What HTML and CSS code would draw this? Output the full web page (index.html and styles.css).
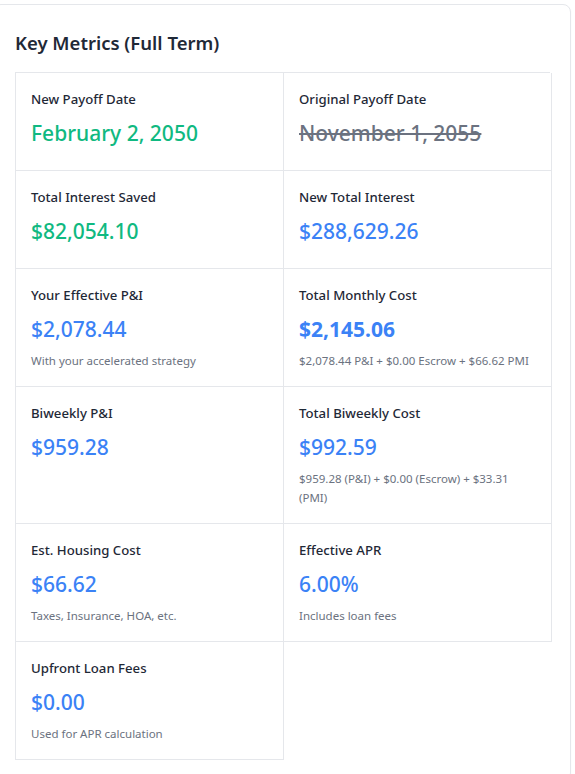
FILE: index.html
```html
<!DOCTYPE html>
<html lang="en">
<head>
<meta charset="utf-8">
<title>Key Metrics</title>
<link rel="stylesheet" href="styles.css">
</head>
<body>
  <section class="card">
    <h2 class="card-title">Key Metrics (Full Term)</h2>
    <div class="metrics">
      <div class="metric">
        <div class="label">New Payoff Date</div>
        <div class="value green">February 2, 2050</div>
      </div>
      <div class="metric">
        <div class="label">Original Payoff Date</div>
        <div class="value muted strike">November 1, 2055</div>
      </div>
      <div class="metric">
        <div class="label">Total Interest Saved</div>
        <div class="value green">$82,054.10</div>
      </div>
      <div class="metric">
        <div class="label">New Total Interest</div>
        <div class="value blue">$288,629.26</div>
      </div>
      <div class="metric">
        <div class="label">Your Effective P&amp;I</div>
        <div class="value blue">$2,078.44</div>
        <div class="note">With your accelerated strategy</div>
      </div>
      <div class="metric">
        <div class="label">Total Monthly Cost</div>
        <div class="value blue bold">$2,145.06</div>
        <div class="note">$2,078.44 P&amp;I + $0.00 Escrow + $66.62 PMI</div>
      </div>
      <div class="metric">
        <div class="label">Biweekly P&amp;I</div>
        <div class="value blue">$959.28</div>
      </div>
      <div class="metric">
        <div class="label">Total Biweekly Cost</div>
        <div class="value blue">$992.59</div>
        <div class="note">$959.28 (P&amp;I) + $0.00 (Escrow) + $33.31 (PMI)</div>
      </div>
      <div class="metric">
        <div class="label">Est. Housing Cost</div>
        <div class="value blue">$66.62</div>
        <div class="note">Taxes, Insurance, HOA, etc.</div>
      </div>
      <div class="metric">
        <div class="label">Effective APR</div>
        <div class="value blue">6.00%</div>
        <div class="note">Includes loan fees</div>
      </div>
      <div class="metric">
        <div class="label">Upfront Loan Fees</div>
        <div class="value blue">$0.00</div>
        <div class="note">Used for APR calculation</div>
      </div>
    </div>
  </section>
</body>
</html>
```

FILE: styles.css
```css
* { box-sizing: border-box; }

html, body {
  margin: 0;
  padding: 0;
  background: #ffffff;
}

body {
  font-family: "Noto Sans", "Open Sans", "DejaVu Sans", sans-serif;
  color: #1f2937;
  overflow: hidden;
}

.card {
  margin: 4px 4px 0 -7px;
  padding: 24px 20px 20px 21px;
  border: 1px solid #e5e7eb;
  border-radius: 8px;
  background: #ffffff;
  box-shadow: 0 1px 2px rgba(0, 0, 0, 0.04);
}

.card-title {
  margin: 0 0 15px 0;
  font-size: 18.5px;
  line-height: 28px;
  font-weight: 600;
  color: #1f2937;
}

.metrics {
  display: grid;
  grid-template-columns: 268px 268px;
  border-top: 1px solid #e5e7eb;
  border-left: 1px solid #e5e7eb;
}

.metric {
  padding: 16px 15px 19px 15px;
  border-right: 1px solid #e5e7eb;
  border-bottom: 1px solid #e5e7eb;
}

.label {
  font-size: 13.2px;
  line-height: 20px;
  font-weight: 500;
  color: #1f2937;
}

.value {
  margin-top: 6px;
  font-size: 21px;
  line-height: 36px;
  font-weight: 500;
}

.value.bold { font-weight: 700; }

.green { color: #10b981; }
.blue { color: #3b82f6; }
.muted { color: #6b7280; }
.strike { text-decoration: line-through; text-decoration-thickness: 2px; }

.note {
  margin-top: 4px;
  margin-bottom: -3px;
  font-size: 11.5px;
  line-height: 19px;
  color: #6b7280;
}
```
